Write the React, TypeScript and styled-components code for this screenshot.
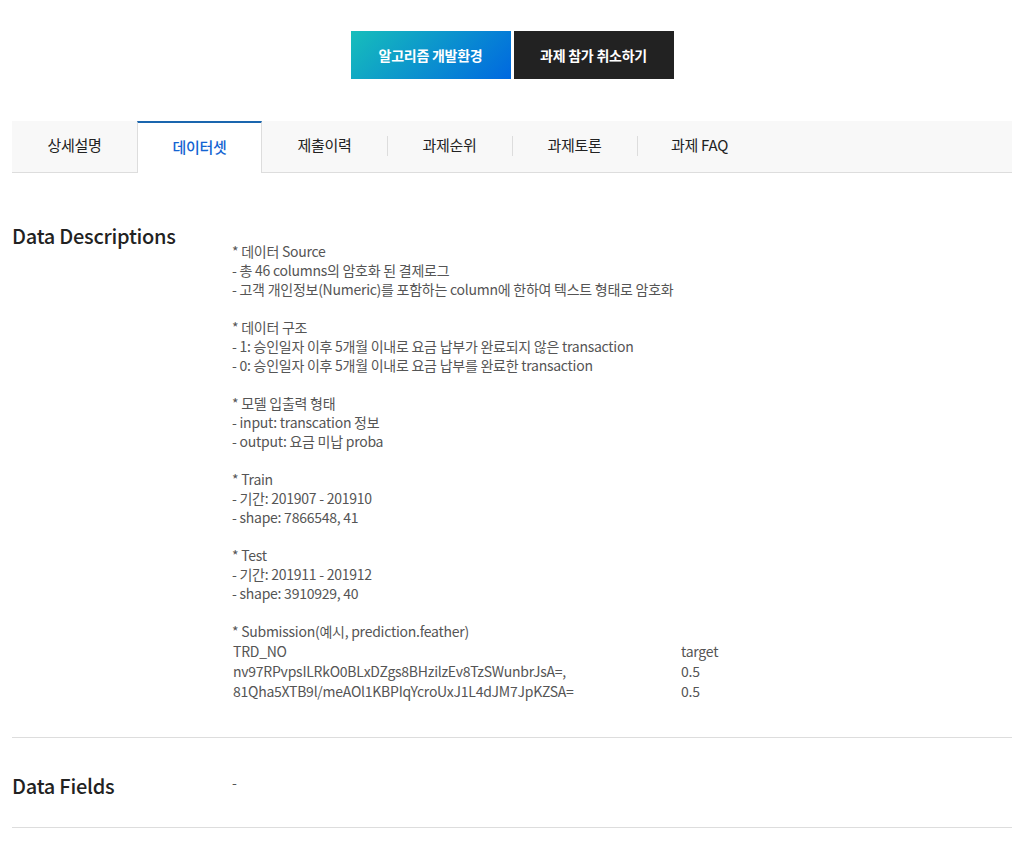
import React from "react";
import styled, { createGlobalStyle } from "styled-components";

const GlobalStyle = createGlobalStyle`
  * { box-sizing: border-box; }
  body {
    margin: 0;
    background: #fff;
    color: #555;
    font-family: "Noto Sans CJK KR", "Noto Sans", sans-serif;
    font-size: 14px;
    line-height: 19px;
    letter-spacing: -0.018em;
  }
`;

const Page = styled.main`
  padding: 31px 20px 24px 12px;
`;

const Actions = styled.div`
  display: flex;
  justify-content: center;
  gap: 3px;
  margin-bottom: 42px;
`;

const ActionButton = styled.button<{ $primary?: boolean }>`
  width: 160px;
  height: 48px;
  padding: 0;
  border: 0;
  background: ${(p) => (p.$primary ? "linear-gradient(135deg, #17bebb, #0068e0)" : "#222")};
  color: #fff;
  font: inherit;
  font-weight: 700;
  letter-spacing: inherit;
  cursor: pointer;
`;

const Tabs = styled.nav`
  display: flex;
  height: 52px;
  background: #f8f8f8;
  border-bottom: 1px solid #ddd;
`;

const Tab = styled.a<{ $active?: boolean; $divided?: boolean }>`
  display: flex;
  align-items: center;
  justify-content: center;
  width: 125px;
  height: 52px;
  padding-bottom: ${(p) => (p.$active ? "4px" : "6px")};
  color: ${(p) => (p.$active ? "#1464d2" : "#222")};
  font-weight: ${(p) => (p.$active ? 500 : 400)};
  font-size: 15px;
  text-decoration: none;
  ${(p) =>
    p.$active &&
    `
    background: #fff;
    border: 1px solid #ddd;
    border-top: 2px solid #1a66ae;
    border-bottom: 0;
  `}
  ${(p) =>
    p.$divided &&
    `
    background: linear-gradient(#ddd, #ddd) left 15px / 1px 20px no-repeat;
  `}
`;

const Section = styled.section`
  display: grid;
  grid-template-columns: 220px 1fr;
  border-bottom: 1px solid #ddd;
  padding: 35px 0 28px;
`;

const Descriptions = styled(Section)`
  padding: 50px 0 36px;
`;

const Heading = styled.h2`
  margin: 0;
  color: #222;
  font-size: 20px;
  font-weight: 500;
  line-height: 26px;
`;

const Content = styled.div`
  padding-top: 19px;
`;

const Paragraph = styled.p`
  margin: 0 0 19px;
  white-space: pre-line;

  &:last-of-type { margin-bottom: 0; }
`;

const Sample = styled.table`
  border-collapse: collapse;
  line-height: 20px;

  th, td {
    padding: 0 0 0 1px;
    text-align: left;
    font-weight: 400;
  }
  th:first-child { width: 448px; }
`;

const tabs = ["상세설명", "데이터셋", "제출이력", "과제순위", "과제토론", "과제 FAQ"];

const paragraphs = [
  "* 데이터 Source\n- 총 46 columns의 암호화 된 결제로그\n- 고객 개인정보(Numeric)를 포함하는 column에 한하여 텍스트 형태로 암호화",
  "* 데이터 구조\n- 1: 승인일자 이후 5개월 이내로 요금 납부가 완료되지 않은 transaction\n- 0: 승인일자 이후 5개월 이내로 요금 납부를 완료한 transaction",
  "* 모델 입출력 형태\n- input: transcation 정보\n- output: 요금 미납 proba",
  "* Train\n- 기간: 201907 - 201910\n- shape: 7866548, 41",
  "* Test\n- 기간: 201911 - 201912\n- shape: 3910929, 40",
  "* Submission(예시, prediction.feather)",
];

const samples = [
  ["nv97RPvpsILRkO0BLxDZgs8BHzilzEv8TzSWunbrJsA=,", "0.5"],
  ["81Qha5XTB9l/meAOl1KBPIqYcroUxJ1L4dJM7JpKZSA=", "0.5"],
];

export default function App() {
  return (
    <>
      <GlobalStyle />
      <Page>
        <Actions>
          <ActionButton type="button" $primary>알고리즘 개발환경</ActionButton>
          <ActionButton type="button">과제 참가 취소하기</ActionButton>
        </Actions>
        <Tabs>
          {tabs.map((label, i) => (
            <Tab key={label} href="#" $active={i === 1} $divided={i > 2} aria-current={i === 1 ? "page" : undefined}>
              {label}
            </Tab>
          ))}
        </Tabs>
        <Descriptions>
          <Heading>Data Descriptions</Heading>
          <Content>
            {paragraphs.map((text) => (
              <Paragraph key={text}>{text}</Paragraph>
            ))}
            <Sample>
              <thead>
                <tr><th scope="col">TRD_NO</th><th scope="col">target</th></tr>
              </thead>
              <tbody>
                {samples.map(([id, target]) => (
                  <tr key={id}><td>{id}</td><td>{target}</td></tr>
                ))}
              </tbody>
            </Sample>
          </Content>
        </Descriptions>
        <Section>
          <Heading>Data Fields</Heading>
          <Paragraph>-</Paragraph>
        </Section>
      </Page>
    </>
  );
}
